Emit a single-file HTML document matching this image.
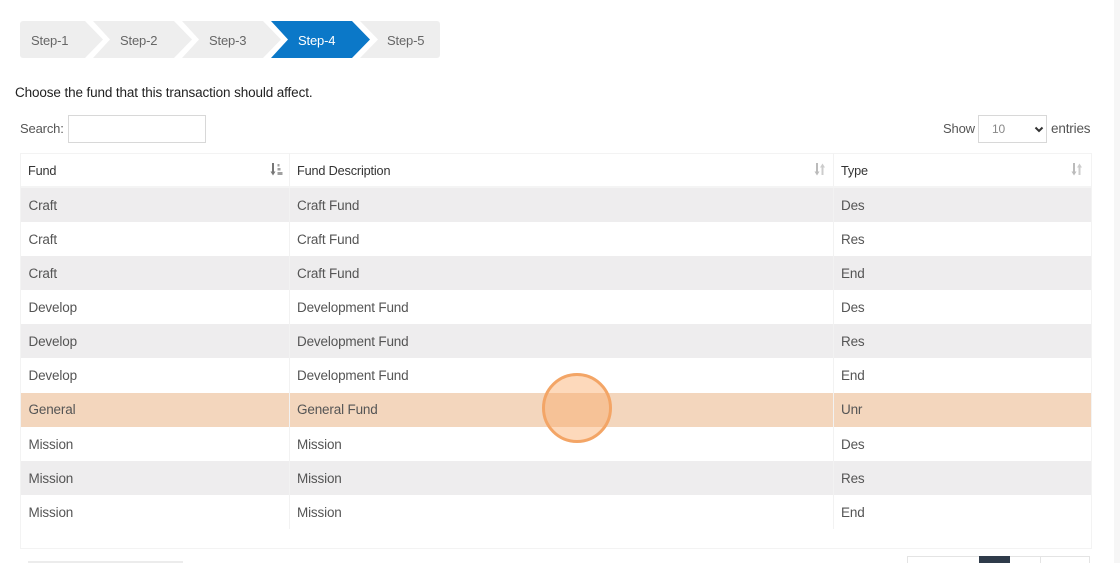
<!DOCTYPE html>
<html><head><meta charset="utf-8">
<style>
html,body{margin:0;padding:0;background:#fff;width:1120px;height:563px;overflow:hidden}
body{position:relative;font-family:"Liberation Sans",sans-serif;font-size:13.5px;letter-spacing:-.16px;color:#555}
.a{position:absolute;white-space:nowrap}
.row{position:absolute;left:21px;width:1070px;height:34px}
.row span{position:absolute;top:1px;line-height:34px}
.c1{left:7.5px}.c2{left:276px}.c3{left:820px}
.g{background:#eeedee}
.v{position:absolute;width:1px;background:#f2f2f2}
.s{font-size:13px;color:#666}
.h{font-size:12.7px;color:#333}
</style></head><body>
<div class="a" style="left:1114px;top:0;width:6px;height:563px;background:#f6f6f6"></div>
<svg class="a" style="left:20px;top:21px" width="421" height="37">
<path d="M3 0H65L83 18.500L65 37H3A3 3 0 0 1 0 34V3A3 3 0 0 1 3 0Z" fill="#eeeeee"/>
<path d="M73 0H154L172 18.500L154 37H73L90 18.500Z" fill="#eeeeee"/>
<path d="M162 0H243L261 18.500L243 37H162L179 18.500Z" fill="#eeeeee"/>
<path d="M340 0H417A3 3 0 0 1 420 3V34A3 3 0 0 1 417 37H340L358 18.500Z" fill="#eeeeee"/>
<path d="M251 0H332L350 18.500L332 37H251L268 18.500Z" fill="#0b78c8"/>
</svg>
<div class="a s" style="left:31px;top:33px">Step-1</div>
<div class="a s" style="left:120px;top:33px">Step-2</div>
<div class="a s" style="left:209px;top:33px">Step-3</div>
<div class="a s" style="left:298px;top:33px;color:#fff">Step-4</div>
<div class="a s" style="left:387px;top:33px">Step-5</div>
<div class="a" style="left:15px;top:85px;color:#222;letter-spacing:-.12px">Choose the fund that this transaction should affect.</div>
<div class="a" style="left:20px;top:121px;font-size:13px">Search:</div>
<div class="a" style="left:68px;top:115px;width:136px;height:26px;border:1px solid #d8d8d8"></div>
<div class="a" style="left:943px;top:121px;font-size:13px">Show</div>
<div class="a" style="left:978px;top:115px;width:67px;height:26px;border:1px solid #d8d8d8"></div>
<div class="a" style="left:992px;top:122px;font-size:12px;color:#888">10</div>
<svg class="a" style="left:1034px;top:126px" width="10" height="7"><path d="M1.500 1.500L5 5L8.500 1.500" fill="none" stroke="#333" stroke-width="2"/></svg>
<div class="a" style="left:1051px;top:121px">entries</div>
<div class="a" style="left:20px;top:153px;width:1070px;height:394px;border:1px solid #f3f3f3"></div>
<div class="a h" style="left:28px;top:164px">Fund</div>
<div class="a h" style="left:297px;top:164px">Fund Description</div>
<div class="a h" style="left:841px;top:164px">Type</div>
<svg class="a" style="left:270px;top:163px" width="13" height="13"><path d="M3 0V10" stroke="#777" stroke-width="2"/><path d="M0.500 8.500H5.500L3 12.500Z" fill="#777"/><path d="M7.500 1H9.500V3.500H7.500ZM7.500 5H10.500V7.500H7.500ZM7.500 9H12.500V12H7.500Z" fill="#a0a0a0"/></svg>
<svg class="a" style="left:814px;top:163px" width="13" height="13"><path d="M3 0V10" stroke="#bbb" stroke-width="2"/><path d="M0.500 8.500H5.500L3 12.500Z" fill="#bbb"/><path d="M8.500 12V3" stroke="#ccc" stroke-width="2"/><path d="M6 4.500H11L8.500 0.500Z" fill="#ccc"/></svg>
<svg class="a" style="left:1071px;top:163px" width="13" height="13"><path d="M3 0V10" stroke="#bbb" stroke-width="2"/><path d="M0.500 8.500H5.500L3 12.500Z" fill="#bbb"/><path d="M8.500 12V3" stroke="#ccc" stroke-width="2"/><path d="M6 4.500H11L8.500 0.500Z" fill="#ccc"/></svg>
<div class="row g" style="top:188px"><span class="c1">Craft</span><span class="c2">Craft Fund</span><span class="c3">Des</span></div>
<div class="row" style="top:222px"><span class="c1">Craft</span><span class="c2">Craft Fund</span><span class="c3">Res</span></div>
<div class="row g" style="top:256px"><span class="c1">Craft</span><span class="c2">Craft Fund</span><span class="c3">End</span></div>
<div class="row" style="top:290px"><span class="c1">Develop</span><span class="c2">Development Fund</span><span class="c3">Des</span></div>
<div class="row g" style="top:324px"><span class="c1">Develop</span><span class="c2">Development Fund</span><span class="c3">Res</span></div>
<div class="row" style="top:358px"><span class="c1">Develop</span><span class="c2">Development Fund</span><span class="c3">End</span></div>
<div class="row" style="top:393px;background:#f3d6bd"><span class="c1" style="top:0">General</span><span class="c2" style="top:0">General Fund</span><span class="c3" style="top:0">Unr</span></div>
<div class="row" style="top:427px"><span class="c1">Mission</span><span class="c2">Mission</span><span class="c3">Des</span></div>
<div class="row g" style="top:461px"><span class="c1">Mission</span><span class="c2">Mission</span><span class="c3">Res</span></div>
<div class="row" style="top:495px"><span class="c1">Mission</span><span class="c2">Mission</span><span class="c3">End</span></div>
<div class="v" style="left:289px;top:153px;height:376px"></div>
<div class="v" style="left:833px;top:153px;height:376px"></div>
<div class="a" style="left:21px;top:186px;width:1070px;height:2px;background:#f4f4f4"></div>
<div class="a" style="left:542px;top:373px;width:64px;height:64px;border:3px solid #f3a566;border-radius:50%;background:rgba(250,170,105,.45)"></div>
<div class="a" style="left:907px;top:556px;width:183px;height:7px;border:1px solid #e4e4e4;box-sizing:border-box;border-bottom:0"></div>
<div class="a" style="left:979px;top:556px;width:31px;height:7px;background:#2f3b4a"></div>
<div class="v" style="left:1040px;top:556px;height:7px;background:#e4e4e4"></div>
<div class="a" style="left:28px;top:561px;width:155px;height:2px;background:#ececec"></div>
</body></html>
